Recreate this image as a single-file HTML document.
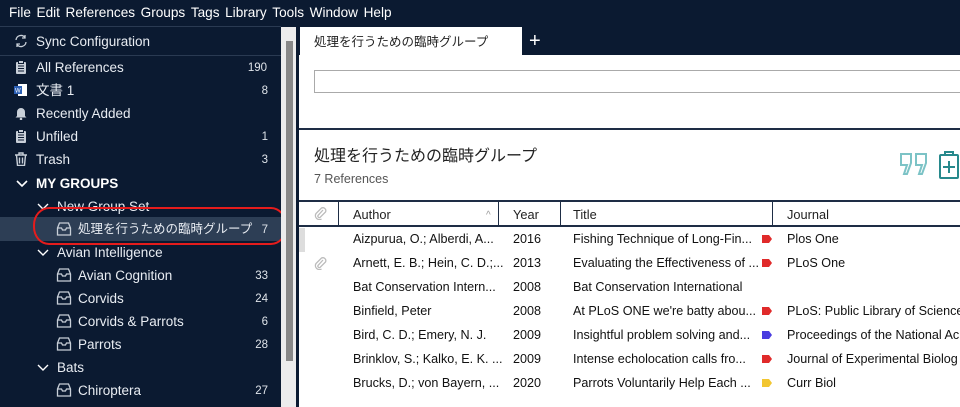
<!DOCTYPE html>
<html style="width:960px;height:407px;overflow:hidden"><head><meta charset="utf-8"><style>
*{margin:0;padding:0;box-sizing:border-box}
body{width:960px;height:407px;overflow:hidden;background:#0b1a31;font-family:"Liberation Sans","Noto Sans CJK JP",sans-serif;position:relative;color:#fff}
.a{position:absolute;white-space:nowrap;line-height:17px}
.menu{top:4px;font-size:13.6px;color:#fff}
.menu span{margin-right:5.6px}
.sb{font-size:13.5px;color:#e8ecf2}
.cnt{font-size:11.5px;color:#dfe4ea;right:692px}
.ic{position:absolute;width:14px;height:14px}
.t{font-size:12.6px;color:#111}
.th{font-size:12.8px;color:#222}
.tag{position:absolute;width:10px;height:8px;clip-path:polygon(0 0,70% 0,100% 50%,70% 100%,0 100%)}
</style></head><body>
<div class="a menu" style="left:9px"><span>File</span><span>Edit</span><span>References</span><span>Groups</span><span>Tags</span><span>Library</span><span>Tools</span><span>Window</span><span>Help</span></div>
<div class="a" style="left:0;top:26px;width:281px;height:1px;background:#2a3a52"></div>
<div class="a" style="left:0;top:55px;width:281px;height:1px;background:#2a3a52"></div>
<svg class="ic" style="left:14px;top:34px" viewBox="0 0 14 14" fill="none" stroke="#c8cfd8" stroke-width="1.3"><path d="M2 6A5 5 0 0 1 11 3.5M12 8A5 5 0 0 1 3 10.5M11 1v3h-3M3 13v-3h3"/></svg>
<div class="a sb" style="left:36px;top:33px">Sync Configuration</div>

<svg class="ic" style="left:14px;top:60px" viewBox="0 0 14 14"><rect x="2" y="2" width="10" height="12" rx="1" fill="#c8cfd8"/><rect x="4.5" y="0.5" width="5" height="3" fill="#c8cfd8" stroke="#0b1a31"/><path d="M4 6h6M4 8.5h6M4 11h6" stroke="#0b1a31"/></svg>
<div class="a sb" style="left:36px;top:59px">All References</div><div class="a cnt" style="top:60px;right:693px">190</div>
<svg class="ic" style="left:14px;top:83px" viewBox="0 0 14 14"><rect x="4" y="1" width="9" height="12" fill="#fff"/><rect x="0" y="3" width="8" height="8" fill="#2b5fb4"/><text x="1" y="9.5" font-size="6" fill="#fff" font-family="Liberation Sans">W</text></svg>
<div class="a sb" style="left:36px;top:82px">文書 1</div><div class="a cnt" style="top:83px">8</div>
<svg class="ic" style="left:14px;top:106px" viewBox="0 0 14 14"><path d="M3 10V6a4 4 0 0 1 8 0v4l1.5 1.5h-11z" fill="#c8cfd8"/><circle cx="7" cy="13" r="1.3" fill="#c8cfd8"/></svg>
<div class="a sb" style="left:36px;top:105px">Recently Added</div>
<svg class="ic" style="left:14px;top:129px" viewBox="0 0 14 14"><rect x="2" y="2" width="10" height="12" rx="1" fill="#c8cfd8"/><rect x="4.5" y="0.5" width="5" height="3" fill="#c8cfd8" stroke="#0b1a31"/><path d="M4 6h6M4 8.5h6M4 11h6" stroke="#0b1a31"/></svg>
<div class="a sb" style="left:36px;top:128px">Unfiled</div><div class="a cnt" style="top:129px">1</div>
<svg class="ic" style="left:14px;top:152px" viewBox="0 0 14 14" fill="none" stroke="#c8cfd8" stroke-width="1.4"><path d="M1 3h12M5 3V1h4v2M2.5 3l1 10.5h7l1-10.5M5.5 5.5v6M8.5 5.5v6"/></svg>
<div class="a sb" style="left:36px;top:151px">Trash</div><div class="a cnt" style="top:152px">3</div>
<svg class="ic" style="left:15px;top:177px" viewBox="0 0 14 14" fill="none" stroke="#fff" stroke-width="1.6"><path d="M2 4l5 5 5-5"/></svg>
<div class="a sb" style="left:36px;top:175px;font-weight:bold;color:#fff">MY GROUPS</div>
<svg class="ic" style="left:36px;top:200px" viewBox="0 0 14 14" fill="none" stroke="#fff" stroke-width="1.4"><path d="M2 4l5 5 5-5"/></svg>
<div class="a sb" style="left:57px;top:198px">New Group Set</div>
<div class="a" style="left:0;top:217px;width:281px;height:24px;background:#2d3e55"></div>
<div class="a sb" style="left:78px;top:221px;font-size:12.5px">処理を行うための臨時グループ</div><div class="a cnt" style="top:222px">7</div>
<svg class="ic" style="left:36px;top:246px" viewBox="0 0 14 14" fill="none" stroke="#fff" stroke-width="1.4"><path d="M2 4l5 5 5-5"/></svg>
<div class="a sb" style="left:57px;top:244px">Avian Intelligence</div>
<div class="a sb" style="left:78px;top:267px">Avian Cognition</div><div class="a cnt" style="top:268px">33</div>
<div class="a sb" style="left:78px;top:290px">Corvids</div><div class="a cnt" style="top:291px">24</div>
<div class="a sb" style="left:78px;top:313px">Corvids &amp; Parrots</div><div class="a cnt" style="top:314px">6</div>
<div class="a sb" style="left:78px;top:336px">Parrots</div><div class="a cnt" style="top:337px">28</div>
<svg class="ic" style="left:36px;top:361px" viewBox="0 0 14 14" fill="none" stroke="#fff" stroke-width="1.4"><path d="M2 4l5 5 5-5"/></svg>
<div class="a sb" style="left:57px;top:359px">Bats</div>
<div class="a sb" style="left:78px;top:382px">Chiroptera</div><div class="a cnt" style="top:383px">27</div>
<svg style="position:absolute;left:56px;top:222px" width="16" height="185" viewBox="0 0 16 185">
<g fill="none" stroke="#c8cfd8" stroke-width="1.3">
<path d="M1.5 6l2-5h9l2 5v7h-13zM1.5 6h4l1 2h3l1-2h4"/>
<path transform="translate(0,46)" d="M1.5 6l2-5h9l2 5v7h-13zM1.5 6h4l1 2h3l1-2h4"/>
<path transform="translate(0,69)" d="M1.5 6l2-5h9l2 5v7h-13zM1.5 6h4l1 2h3l1-2h4"/>
<path transform="translate(0,92)" d="M1.5 6l2-5h9l2 5v7h-13zM1.5 6h4l1 2h3l1-2h4"/>
<path transform="translate(0,115)" d="M1.5 6l2-5h9l2 5v7h-13zM1.5 6h4l1 2h3l1-2h4"/>
<path transform="translate(0,161)" d="M1.5 6l2-5h9l2 5v7h-13zM1.5 6h4l1 2h3l1-2h4"/>
</g></svg>
<div class="a" style="left:33px;top:207px;width:254px;height:38px;border:2.5px solid #e51c1c;border-radius:16px/18px"></div>
<div class="a" style="left:281px;top:27px;width:15px;height:380px;background:#ececec"></div>
<div class="a" style="left:286px;top:41px;width:7px;height:320px;background:#888"></div>
<div class="a" style="left:299px;top:55px;width:661px;height:352px;background:#fff"></div>
<div class="a" style="left:300px;top:27px;width:222px;height:29px;background:#fff"></div>
<div class="a" style="left:314px;top:34px;font-size:12.5px;color:#222">処理を行うための臨時グループ</div>
<div class="a" style="left:529px;top:31px;font-size:20px;color:#fff;line-height:20px">+</div>
<div class="a" style="left:314px;top:70px;width:660px;height:23px;border:1px solid #aaa"></div>
<div class="a" style="left:299px;top:128px;width:661px;height:2px;background:#1e2d45"></div>
<div class="a" style="left:314px;top:147px;font-size:16px;color:#222;line-height:20px">処理を行うための臨時グループ</div>
<div class="a" style="left:314px;top:171px;font-size:12.5px;color:#555">7 References</div>
<svg style="position:absolute;left:899px;top:152px" width="30" height="24" viewBox="0 0 30 24" fill="none" stroke="#7cc3c6" stroke-width="2"><path d="M2 2h10v9l-4 11h-3l3-9h-6zM17 2h10v9l-4 11h-3l3-9h-6z"/></svg>
<svg style="position:absolute;left:938px;top:150px" width="22" height="30" viewBox="0 0 22 30" fill="none" stroke="#27898c" stroke-width="2"><rect x="2" y="5" width="18" height="23" rx="1"/><path d="M7 5V2h8v3M11 11v12M5 17h12"/></svg>
<div class="a" style="left:299px;top:200px;width:661px;height:27px;border-top:2px solid #1e2d45;border-bottom:2px solid #1e2d45"></div>
<div class="a" style="left:338px;top:201px;width:1px;height:25px;background:#1e2d45"></div>
<div class="a" style="left:498px;top:201px;width:1px;height:25px;background:#1e2d45"></div>
<div class="a" style="left:560px;top:201px;width:1px;height:25px;background:#1e2d45"></div>
<div class="a" style="left:772px;top:201px;width:1px;height:25px;background:#1e2d45"></div>
<svg style="position:absolute;left:313px;top:206px" width="14" height="14" viewBox="0 0 14 14" fill="none" stroke="#bbb" stroke-width="1.3"><path d="M10 4L5 9.5a1.5 1.5 0 0 0 2 2L12.5 6a3 3 0 0 0-4-4L3 7.5a4 4 0 0 0 5.5 5.5"/></svg>
<svg style="position:absolute;left:313px;top:256px" width="14" height="14" viewBox="0 0 14 14" fill="none" stroke="#bbb" stroke-width="1.3"><path d="M10 4L5 9.5a1.5 1.5 0 0 0 2 2L12.5 6a3 3 0 0 0-4-4L3 7.5a4 4 0 0 0 5.5 5.5"/></svg>
<div class="a th" style="left:353px;top:206px">Author</div>
<div class="a" style="left:486px;top:207px;font-size:10px;color:#999">^</div>
<div class="a th" style="left:513px;top:206px">Year</div>
<div class="a th" style="left:573px;top:206px">Title</div>
<div class="a th" style="left:787px;top:206px">Journal</div>
<div class="a" style="left:299px;top:228px;width:6px;height:24px;background:#ddd"></div>
<div class="a t" style="left:353px;top:231px">Aizpurua, O.; Alberdi, A...</div><div class="a t" style="left:513px;top:231px">2016</div><div class="a t" style="left:573px;top:231px">Fishing Technique of Long-Fin...</div><div class="tag" style="left:762px;top:235px;background:#e02a2a"></div><div class="a t" style="left:787px;top:231px">Plos One</div>
<div class="a t" style="left:353px;top:255px">Arnett, E. B.; Hein, C. D.;...</div><div class="a t" style="left:513px;top:255px">2013</div><div class="a t" style="left:573px;top:255px">Evaluating the Effectiveness of ...</div><div class="tag" style="left:762px;top:259px;background:#e02a2a"></div><div class="a t" style="left:787px;top:255px">PLoS One</div>
<div class="a t" style="left:353px;top:279px">Bat Conservation Intern...</div><div class="a t" style="left:513px;top:279px">2008</div><div class="a t" style="left:573px;top:279px">Bat Conservation International</div>
<div class="a t" style="left:353px;top:303px">Binfield, Peter</div><div class="a t" style="left:513px;top:303px">2008</div><div class="a t" style="left:573px;top:303px">At PLoS ONE we're batty abou...</div><div class="tag" style="left:762px;top:307px;background:#e02a2a"></div><div class="a t" style="left:787px;top:303px">PLoS: Public Library of Science</div>
<div class="a t" style="left:353px;top:327px">Bird, C. D.; Emery, N. J.</div><div class="a t" style="left:513px;top:327px">2009</div><div class="a t" style="left:573px;top:327px">Insightful problem solving and...</div><div class="tag" style="left:762px;top:331px;background:#4a3de0"></div><div class="a t" style="left:787px;top:327px">Proceedings of the National Ac</div>
<div class="a t" style="left:353px;top:351px">Brinklov, S.; Kalko, E. K. ...</div><div class="a t" style="left:513px;top:351px">2009</div><div class="a t" style="left:573px;top:351px">Intense echolocation calls fro...</div><div class="tag" style="left:762px;top:355px;background:#e02a2a"></div><div class="a t" style="left:787px;top:351px">Journal of Experimental Biolog</div>
<div class="a t" style="left:353px;top:375px">Brucks, D.; von Bayern, ...</div><div class="a t" style="left:513px;top:375px">2020</div><div class="a t" style="left:573px;top:375px">Parrots Voluntarily Help Each ...</div><div class="tag" style="left:762px;top:379px;background:#f2c631"></div><div class="a t" style="left:787px;top:375px">Curr Biol</div>
</body></html>
